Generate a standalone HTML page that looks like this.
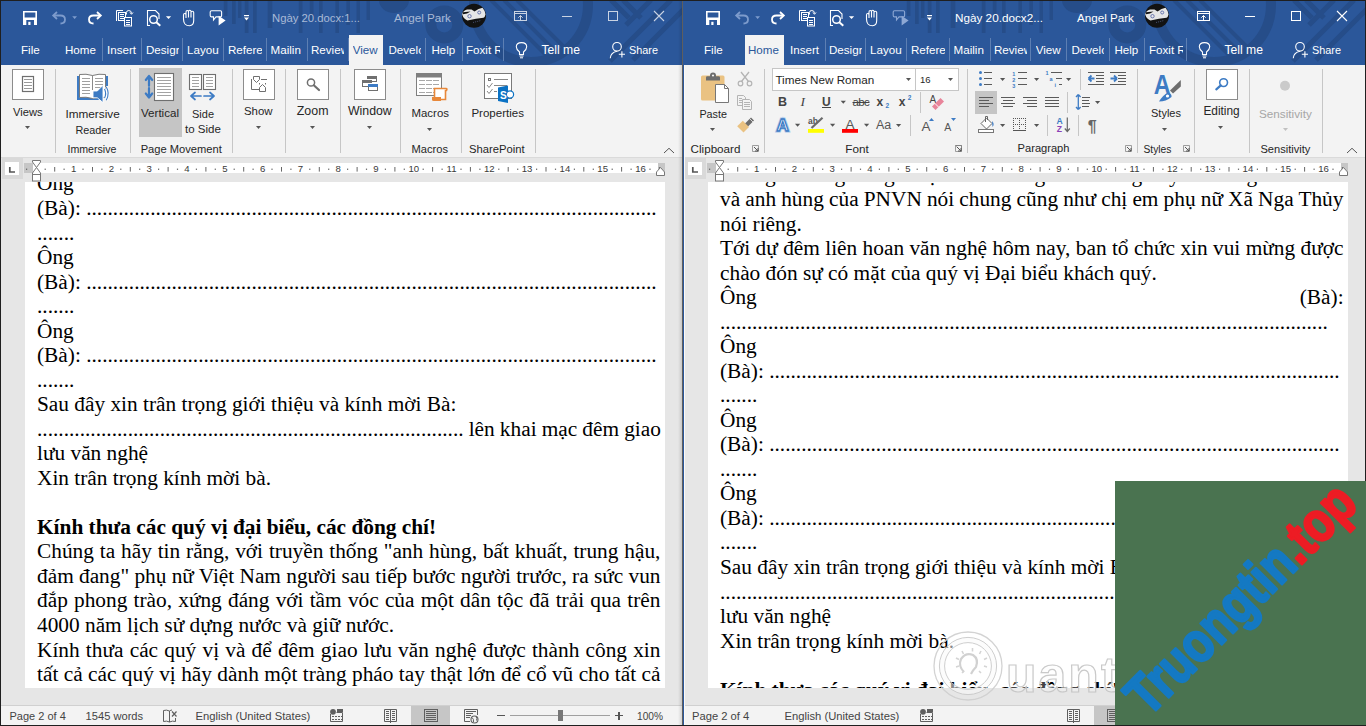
<!DOCTYPE html><html><head><meta charset="utf-8"><style>
html,body{margin:0;padding:0;}
body{width:1366px;height:726px;overflow:hidden;position:relative;background:#1f1f1f;font-family:"Liberation Sans",sans-serif;}
.win{position:absolute;top:0;width:683px;height:726px;overflow:hidden;}
.t{position:absolute;white-space:pre;}
.r{position:absolute;}
.s{position:absolute;overflow:visible;}
.doc{position:absolute;font-family:"Liberation Serif",serif;font-size:21.333px;color:#000;white-space:pre;}
</style></head><body><div class="win" style="left:0px"><div class="r" style="left:1px;top:1px;width:681px;height:64px;background:#2b579a;"></div><svg class="s" style="left:1px;top:1px;" width="681" height="63" viewBox="0 0 681 63"><g fill="#264d89"><rect x="222.8" y="-1" width="3.6" height="16"/><rect x="231" y="-1" width="3.7" height="24"/><rect x="237" y="-1" width="3.4" height="18"/><rect x="243.8" y="-1" width="3.7" height="33"/><rect x="252" y="-1" width="3.7" height="33"/><rect x="266.7" y="-1" width="4.6" height="28"/><rect x="297.8" y="-1" width="3.7" height="33"/><rect x="308.8" y="-1" width="3.7" height="20"/><rect x="318" y="-1" width="3.6" height="33"/><rect x="334.4" y="-1" width="3.6" height="33"/><rect x="345.4" y="-1" width="3.6" height="25"/><rect x="355.5" y="-1" width="3.5" height="33"/><rect x="365.5" y="-1" width="3.5" height="20"/><path d="M378 -1 A15 13 0 0 0 408 -1 Z"/></g><g fill="none" stroke="#264d89"><circle cx="443.3" cy="23.4" r="13.5" stroke-width="11"/><circle cx="530" cy="4" r="57" stroke-width="10"/><clipPath id="cp0"><circle cx="530" cy="4" r="52"/></clipPath><g clip-path="url(#cp0)" stroke-width="4"><path d="M490 -1 L545 54 M503 -1 L558 54 M516 -1 L571 54"/></g><g stroke-width="5"><path d="M670 -1 L609 60 M683 8 L632 59 M650 -1 L625 24 M622 -1 L640 17 M610 -1 L628 17"/></g></g></svg><div class="r" style="left:1px;top:65px;width:681px;height:92px;background:#f3f3f3;"></div><div class="r" style="left:1px;top:157px;width:681px;height:1px;background:#dadada;"></div><div class="r" style="left:1px;top:158px;width:681px;height:547px;background:#e6e6e6;"></div><div class="r" style="left:1px;top:705px;width:681px;height:1px;background:#d0d0d0;"></div><div class="r" style="left:1px;top:706px;width:681px;height:19px;background:#f3f3f3;"></div><div class="t" style="left:272.00px;top:11.76px;font-size:11.313px;line-height:12.637px;color:#a9bad6;">Ngày 20.docx:1...</div><div class="t" style="left:394.00px;top:11.45px;font-size:11.655px;line-height:13.019px;color:#a9bad6;">Angel Park</div><div class="r" style="left:349px;top:35px;width:34px;height:30px;background:#f3f3f3;"></div><div class="r" style="left:102px;top:38px;width:1px;height:23px;background:#5d7fb3;"></div><div class="r" style="left:141px;top:38px;width:1px;height:23px;background:#5d7fb3;"></div><div class="r" style="left:182px;top:38px;width:1px;height:23px;background:#5d7fb3;"></div><div class="r" style="left:223px;top:38px;width:1px;height:23px;background:#5d7fb3;"></div><div class="r" style="left:266px;top:38px;width:1px;height:23px;background:#5d7fb3;"></div><div class="r" style="left:307px;top:38px;width:1px;height:23px;background:#5d7fb3;"></div><div class="r" style="left:348px;top:38px;width:1px;height:23px;background:#5d7fb3;"></div><div class="r" style="left:425px;top:38px;width:1px;height:23px;background:#5d7fb3;"></div><div class="r" style="left:462px;top:38px;width:1px;height:23px;background:#5d7fb3;"></div><div class="r" style="left:503px;top:38px;width:1px;height:23px;background:#5d7fb3;"></div><div class="t" style="left:21.0px;top:43.7px;width:39.0px;overflow:hidden;font-size:11.6px;line-height:12.96px;color:#ffffff">File</div><div class="t" style="left:65.0px;top:43.7px;width:31.5px;overflow:hidden;font-size:11.6px;line-height:12.96px;color:#ffffff">Home</div><div class="t" style="left:107.0px;top:43.7px;width:32.0px;overflow:hidden;font-size:11.6px;line-height:12.96px;color:#ffffff">Insert</div><div class="t" style="left:146.0px;top:43.7px;width:32.5px;overflow:hidden;font-size:11.6px;line-height:12.96px;color:#ffffff">Design</div><div class="t" style="left:187.0px;top:43.7px;width:32.0px;overflow:hidden;font-size:11.6px;line-height:12.96px;color:#ffffff">Layout</div><div class="t" style="left:228.0px;top:43.7px;width:33.5px;overflow:hidden;font-size:11.6px;line-height:12.96px;color:#ffffff">References</div><div class="t" style="left:270.6px;top:43.7px;width:30.4px;overflow:hidden;font-size:11.6px;line-height:12.96px;color:#ffffff">Mailings</div><div class="t" style="left:311.0px;top:43.7px;width:32.5px;overflow:hidden;font-size:11.6px;line-height:12.96px;color:#ffffff">Review</div><div class="t" style="left:352.7px;top:43.7px;width:28.3px;overflow:hidden;font-size:11.6px;line-height:12.96px;color:#2b579a">View</div><div class="t" style="left:388.5px;top:43.7px;width:32.0px;overflow:hidden;font-size:11.6px;line-height:12.96px;color:#ffffff">Developer</div><div class="t" style="left:431.4px;top:43.7px;width:27.6px;overflow:hidden;font-size:11.6px;line-height:12.96px;color:#ffffff">Help</div><div class="t" style="left:466.0px;top:43.7px;width:33.5px;overflow:hidden;font-size:11.6px;line-height:12.96px;color:#ffffff">Foxit Reader</div><div class="t" style="left:541.50px;top:44.00px;font-size:12.153px;line-height:13.575px;color:#ffffff;">Tell me</div><div class="t" style="left:629.00px;top:44.36px;font-size:10.870px;line-height:12.141px;color:#ffffff;">Share</div><div class="r" style="left:55px;top:69px;width:1px;height:84px;background:#c6c6c6;"></div><div class="r" style="left:130px;top:69px;width:1px;height:84px;background:#c6c6c6;"></div><div class="r" style="left:232px;top:69px;width:1px;height:84px;background:#c6c6c6;"></div><div class="r" style="left:285px;top:69px;width:1px;height:84px;background:#c6c6c6;"></div><div class="r" style="left:340px;top:69px;width:1px;height:84px;background:#c6c6c6;"></div><div class="r" style="left:400px;top:69px;width:1px;height:84px;background:#c6c6c6;"></div><div class="r" style="left:461px;top:69px;width:1px;height:84px;background:#c6c6c6;"></div><div class="r" style="left:535px;top:69px;width:1px;height:84px;background:#c6c6c6;"></div><div class="t" style="left:13.00px;top:105.66px;font-size:11.209px;line-height:12.520px;color:#262626;">Views</div><svg class="s" style="left:24.5px;top:126px;" width="6" height="4" viewBox="0 0 6 4"><path d="M0 0 H5 L2.5 3 Z" fill="#555"/></svg><div class="t" style="left:65.40px;top:107.13px;font-size:11.795px;line-height:13.175px;color:#262626;">Immersive</div><div class="t" style="left:75.50px;top:123.90px;font-size:10.823px;line-height:12.090px;color:#262626;">Reader</div><div class="t" style="left:67.50px;top:143.88px;font-size:10.627px;line-height:11.871px;color:#262626;">Immersive</div><div class="r" style="left:139px;top:68px;width:43px;height:69px;background:#c5c5c5;"></div><div class="t" style="left:141.00px;top:107.12px;font-size:11.586px;line-height:12.941px;color:#262626;">Vertical</div><div class="t" style="left:192.00px;top:107.65px;font-size:10.993px;line-height:12.279px;color:#262626;">Side</div><div class="t" style="left:185.00px;top:123.23px;font-size:11.568px;line-height:12.922px;color:#262626;">to Side</div><div class="t" style="left:140.70px;top:142.90px;font-size:11.157px;line-height:12.462px;color:#262626;">Page Movement</div><div class="t" style="left:244.00px;top:105.45px;font-size:11.434px;line-height:12.772px;color:#262626;">Show</div><svg class="s" style="left:255.5px;top:126px;" width="6" height="4" viewBox="0 0 6 4"><path d="M0 0 H5 L2.5 3 Z" fill="#555"/></svg><div class="t" style="left:296.80px;top:104.58px;font-size:12.402px;line-height:13.853px;color:#262626;">Zoom</div><svg class="s" style="left:309.6px;top:126px;" width="6" height="4" viewBox="0 0 6 4"><path d="M0 0 H5 L2.5 3 Z" fill="#555"/></svg><div class="t" style="left:348.00px;top:104.66px;font-size:12.313px;line-height:13.753px;color:#262626;">Window</div><svg class="s" style="left:367px;top:126px;" width="6" height="4" viewBox="0 0 6 4"><path d="M0 0 H5 L2.5 3 Z" fill="#555"/></svg><div class="t" style="left:411.50px;top:107.25px;font-size:11.438px;line-height:12.776px;color:#262626;">Macros</div><svg class="s" style="left:427px;top:127.5px;" width="6" height="4" viewBox="0 0 6 4"><path d="M0 0 H5 L2.5 3 Z" fill="#555"/></svg><div class="t" style="left:411.50px;top:142.92px;font-size:11.133px;line-height:12.436px;color:#262626;">Macros</div><div class="t" style="left:471.40px;top:107.15px;font-size:11.542px;line-height:12.892px;color:#262626;">Properties</div><div class="t" style="left:469.00px;top:142.82px;font-size:11.249px;line-height:12.565px;color:#262626;">SharePoint</div><div class="r" style="left:2px;top:158px;width:21px;height:21px;background:#d9d9d9;"></div><div class="r" style="left:5px;top:162px;width:14px;height:13px;background:#ffffff;"></div><svg class="s" style="left:8px;top:167px;" width="8" height="7" viewBox="0 0 8 7"><path d="M1.8 0 V5 H7" stroke="#555" stroke-width="1.7" fill="none"/></svg><div class="r" style="left:24px;top:163px;width:9px;height:10px;background:#c6c6c6;"></div><div class="r" style="left:33px;top:163px;width:625px;height:10px;background:#ffffff;"></div><div class="r" style="left:658px;top:163px;width:7px;height:10px;background:#c6c6c6;"></div><svg class="s" style="left:0px;top:157px;" width="683" height="25" viewBox="0 0 683 25"><rect x="44.6" y="11.6" width="1.2" height="1.3" fill="#666"/><rect x="54.2" y="10" width="1" height="4.6" fill="#666"/><rect x="63.5" y="11.6" width="1.2" height="1.3" fill="#666"/><rect x="82.4" y="11.6" width="1.2" height="1.3" fill="#666"/><rect x="92.0" y="10" width="1" height="4.6" fill="#666"/><rect x="101.3" y="11.6" width="1.2" height="1.3" fill="#666"/><rect x="120.2" y="11.6" width="1.2" height="1.3" fill="#666"/><rect x="129.8" y="10" width="1" height="4.6" fill="#666"/><rect x="139.1" y="11.6" width="1.2" height="1.3" fill="#666"/><rect x="158.0" y="11.6" width="1.2" height="1.3" fill="#666"/><rect x="167.6" y="10" width="1" height="4.6" fill="#666"/><rect x="176.9" y="11.6" width="1.2" height="1.3" fill="#666"/><rect x="195.8" y="11.6" width="1.2" height="1.3" fill="#666"/><rect x="205.4" y="10" width="1" height="4.6" fill="#666"/><rect x="214.7" y="11.6" width="1.2" height="1.3" fill="#666"/><rect x="233.6" y="11.6" width="1.2" height="1.3" fill="#666"/><rect x="243.2" y="10" width="1" height="4.6" fill="#666"/><rect x="252.5" y="11.6" width="1.2" height="1.3" fill="#666"/><rect x="271.4" y="11.6" width="1.2" height="1.3" fill="#666"/><rect x="281.0" y="10" width="1" height="4.6" fill="#666"/><rect x="290.3" y="11.6" width="1.2" height="1.3" fill="#666"/><rect x="309.2" y="11.6" width="1.2" height="1.3" fill="#666"/><rect x="318.8" y="10" width="1" height="4.6" fill="#666"/><rect x="328.1" y="11.6" width="1.2" height="1.3" fill="#666"/><rect x="347.0" y="11.6" width="1.2" height="1.3" fill="#666"/><rect x="356.6" y="10" width="1" height="4.6" fill="#666"/><rect x="365.9" y="11.6" width="1.2" height="1.3" fill="#666"/><rect x="384.8" y="11.6" width="1.2" height="1.3" fill="#666"/><rect x="394.4" y="10" width="1" height="4.6" fill="#666"/><rect x="403.7" y="11.6" width="1.2" height="1.3" fill="#666"/><rect x="422.6" y="11.6" width="1.2" height="1.3" fill="#666"/><rect x="432.1" y="10" width="1" height="4.6" fill="#666"/><rect x="441.5" y="11.6" width="1.2" height="1.3" fill="#666"/><rect x="460.4" y="11.6" width="1.2" height="1.3" fill="#666"/><rect x="469.9" y="10" width="1" height="4.6" fill="#666"/><rect x="479.3" y="11.6" width="1.2" height="1.3" fill="#666"/><rect x="498.2" y="11.6" width="1.2" height="1.3" fill="#666"/><rect x="507.7" y="10" width="1" height="4.6" fill="#666"/><rect x="517.1" y="11.6" width="1.2" height="1.3" fill="#666"/><rect x="536.0" y="11.6" width="1.2" height="1.3" fill="#666"/><rect x="545.5" y="10" width="1" height="4.6" fill="#666"/><rect x="554.9" y="11.6" width="1.2" height="1.3" fill="#666"/><rect x="573.8" y="11.6" width="1.2" height="1.3" fill="#666"/><rect x="583.3" y="10" width="1" height="4.6" fill="#666"/><rect x="592.7" y="11.6" width="1.2" height="1.3" fill="#666"/><rect x="611.6" y="11.6" width="1.2" height="1.3" fill="#666"/><rect x="621.1" y="10" width="1" height="4.6" fill="#666"/><rect x="630.5" y="11.6" width="1.2" height="1.3" fill="#666"/><rect x="649.4" y="11.6" width="1.2" height="1.3" fill="#666"/><rect x="658.9" y="10" width="1" height="4.6" fill="#666"/><rect x="26" y="11.6" width="1.2" height="1.3" fill="#666"/></svg><div class="t" style="left:65.6px;top:164.2px;width:16px;text-align:center;font-size:9.6px;line-height:9px;color:#3a3a3a">1</div><div class="t" style="left:103.4px;top:164.2px;width:16px;text-align:center;font-size:9.6px;line-height:9px;color:#3a3a3a">2</div><div class="t" style="left:141.2px;top:164.2px;width:16px;text-align:center;font-size:9.6px;line-height:9px;color:#3a3a3a">3</div><div class="t" style="left:179.0px;top:164.2px;width:16px;text-align:center;font-size:9.6px;line-height:9px;color:#3a3a3a">4</div><div class="t" style="left:216.8px;top:164.2px;width:16px;text-align:center;font-size:9.6px;line-height:9px;color:#3a3a3a">5</div><div class="t" style="left:254.6px;top:164.2px;width:16px;text-align:center;font-size:9.6px;line-height:9px;color:#3a3a3a">6</div><div class="t" style="left:292.4px;top:164.2px;width:16px;text-align:center;font-size:9.6px;line-height:9px;color:#3a3a3a">7</div><div class="t" style="left:330.2px;top:164.2px;width:16px;text-align:center;font-size:9.6px;line-height:9px;color:#3a3a3a">8</div><div class="t" style="left:368.0px;top:164.2px;width:16px;text-align:center;font-size:9.6px;line-height:9px;color:#3a3a3a">9</div><div class="t" style="left:405.8px;top:164.2px;width:16px;text-align:center;font-size:9.6px;line-height:9px;color:#3a3a3a">10</div><div class="t" style="left:443.5px;top:164.2px;width:16px;text-align:center;font-size:9.6px;line-height:9px;color:#3a3a3a">11</div><div class="t" style="left:481.3px;top:164.2px;width:16px;text-align:center;font-size:9.6px;line-height:9px;color:#3a3a3a">12</div><div class="t" style="left:519.1px;top:164.2px;width:16px;text-align:center;font-size:9.6px;line-height:9px;color:#3a3a3a">13</div><div class="t" style="left:556.9px;top:164.2px;width:16px;text-align:center;font-size:9.6px;line-height:9px;color:#3a3a3a">14</div><div class="t" style="left:594.7px;top:164.2px;width:16px;text-align:center;font-size:9.6px;line-height:9px;color:#3a3a3a">15</div><div class="t" style="left:632.5px;top:164.2px;width:16px;text-align:center;font-size:9.6px;line-height:9px;color:#3a3a3a">16</div><svg class="s" style="left:31px;top:159px;" width="11" height="23" viewBox="0 0 11 23"><path d="M1.5 1.5 H9.5 V3 L5.5 8.5 L9.5 14 V15.5 H1.5 V14 L5.5 8.5 L1.5 3 Z" fill="#fff" stroke="#777" stroke-width="1"/><rect x="1.5" y="15.5" width="8" height="6.5" fill="#fff" stroke="#777" stroke-width="1"/></svg><svg class="s" style="left:655px;top:163px;" width="11" height="14" viewBox="0 0 11 14"><path d="M1.5 12.5 H9.5 V9 L5.5 4.5 L1.5 9 Z" fill="#fff" stroke="#777" stroke-width="1"/></svg><div class="r" style="left:25px;top:182px;width:640px;height:506px;background:#ffffff;"></div><div style="position:absolute;left:25px;top:182px;width:640px;height:506px;overflow:hidden;"><div style="position:absolute;left:-25px;top:-182px;width:683px;height:726px;"><div class="doc" style="left:37px;top:171.44px;line-height:24.53px;">Ông</div><div class="doc" style="left:37px;top:195.97px;line-height:24.53px;">(Bà): ...........................................................................................................</div><div class="doc" style="left:37px;top:220.50px;line-height:24.53px;">.......</div><div class="doc" style="left:37px;top:245.03px;line-height:24.53px;">Ông</div><div class="doc" style="left:37px;top:269.56px;line-height:24.53px;">(Bà): ...........................................................................................................</div><div class="doc" style="left:37px;top:294.09px;line-height:24.53px;">.......</div><div class="doc" style="left:37px;top:318.62px;line-height:24.53px;">Ông</div><div class="doc" style="left:37px;top:343.15px;line-height:24.53px;">(Bà): ...........................................................................................................</div><div class="doc" style="left:37px;top:367.68px;line-height:24.53px;">.......</div><div class="doc" style="left:37px;top:392.21px;line-height:24.53px;">Sau đây xin trân trọng giới thiệu và kính mời Bà:</div><div class="doc" style="left:37px;top:416.74px;line-height:24.53px;word-spacing:-0.217px;">................................................................................ lên khai mạc đêm giao</div><div class="doc" style="left:37px;top:441.27px;line-height:24.53px;">lưu văn nghệ</div><div class="doc" style="left:37px;top:465.80px;line-height:24.53px;">Xin trân trọng kính mời bà.</div><div class="doc" style="left:37px;top:514.86px;line-height:24.53px;font-weight:bold;">Kính thưa các quý vị đại biểu, các đồng chí!</div><div class="doc" style="left:37px;top:539.39px;line-height:24.53px;word-spacing:0.534px;">Chúng ta hãy tin rằng, với truyền thống "anh hùng, bất khuất, trung hậu,</div><div class="doc" style="left:37px;top:563.92px;line-height:24.53px;word-spacing:-0.064px;">đảm đang" phụ nữ Việt Nam người sau tiếp bước người trước, ra sức vun</div><div class="doc" style="left:37px;top:588.45px;line-height:24.53px;word-spacing:0.870px;">đắp phong trào, xứng đáng với tầm vóc của một dân tộc đã trải qua trên</div><div class="doc" style="left:37px;top:612.98px;line-height:24.53px;">4000 năm lịch sử dựng nước và giữ nước.</div><div class="doc" style="left:37px;top:637.51px;line-height:24.53px;word-spacing:0.868px;">Kính thưa các quý vị và để đêm giao lưu văn nghệ được thành công xin</div><div class="doc" style="left:37px;top:662.04px;line-height:24.53px;word-spacing:0.056px;">tất cả các quý vị hãy dành một tràng pháo tay thật lớn để cổ vũ cho tất cả</div><div class="doc" style="left:37px;top:686.57px;line-height:24.53px;">các đại biểu đến dự.</div></div></div><div class="t" style="left:9.50px;top:709.84px;font-size:11.011px;line-height:12.299px;color:#444444;">Page 2 of 4</div><div class="t" style="left:85.60px;top:709.72px;font-size:11.134px;line-height:12.437px;color:#444444;">1545 words</div><div class="t" style="left:195.50px;top:709.63px;font-size:11.238px;line-height:12.553px;color:#444444;">English (United States)</div><div class="r" style="left:411px;top:706px;width:39px;height:19px;background:#c6c6c6;"></div><div class="t" style="left:637.00px;top:710.61px;font-size:10.158px;line-height:11.346px;color:#444444;">100%</div><div class="r" style="left:510px;top:715px;width:100px;height:1px;background:#a0a0a0;"></div><div class="r" style="left:558px;top:710px;width:5px;height:11px;background:#777777;"></div><div class="r" style="left:497px;top:715px;width:8px;height:1.4px;background:#555;"></div><div class="r" style="left:615px;top:715px;width:8px;height:1.4px;background:#555;"></div><div class="r" style="left:618.3px;top:711.5px;width:1.4px;height:8px;background:#555;"></div><svg class="s" style="left:0;top:0" width="683" height="726" viewBox="0 0 683 726"><defs><filter id="blur0"><feGaussianBlur stdDeviation="0.7"/></filter></defs><path d="M23 11 H37 V25 H23 Z M24.6 12.6 V17.6 H35.4 V12.6 Z M26.3 20 V25 H34 V20 Z" fill="#ffffff" fill-rule="evenodd"/><rect x="28.3" y="21.8" width="2.2" height="3.2" fill="#ffffff"/><path d="M54 15.5 H60.5 Q65 15.5 65 19.5 Q65 23.5 60.5 23.5" stroke="#7d9bcc" stroke-width="1.8" fill="none"/><path d="M57 12 L53.2 15.5 L57 19" stroke="#7d9bcc" stroke-width="1.8" fill="none"/><path d="M72.2 16.3 H77 L74.6 19 Z" fill="#7d9bcc"/><path d="M100 15.5 H93.5 Q89 15.5 89 19.5 Q89 23.5 93.5 23.5" stroke="#ffffff" stroke-width="1.8" fill="none"/><path d="M97 12 L100.8 15.5 L97 19" stroke="#ffffff" stroke-width="1.8" fill="none"/><path d="M116.5 21 V10.5 H123" stroke="#ffffff" stroke-width="1" fill="none"/><rect x="118.5" y="12.5" width="7" height="8" fill="#2b579a" stroke="#ffffff" stroke-width="1"/><rect x="120" y="14" width="4" height="1" fill="#ffffff"/><rect x="120" y="16" width="4" height="1" fill="#ffffff"/><rect x="120" y="18" width="4" height="1" fill="#ffffff"/><rect x="124.5" y="17.5" width="7" height="8.5" fill="#2b579a" stroke="#ffffff" stroke-width="1"/><rect x="126" y="20" width="4" height="1" fill="#ffffff"/><rect x="126" y="22" width="4" height="1" fill="#ffffff"/><rect x="126" y="24" width="4" height="1" fill="#ffffff"/><path d="M126.5 14.5 V12.5 Q126.5 10.5 128.8 10.5 Q131.5 10.5 131.5 13.5" stroke="#ffffff" stroke-width="1" fill="none"/><path d="M130 12.5 L131.5 14.3 L133 12.5" stroke="#ffffff" stroke-width="1" fill="none"/><path d="M150 25.5 H147.5 V10.5 H155.5 L159 14 V19" stroke="#ffffff" stroke-width="1.1" fill="none"/><circle cx="153.5" cy="19.5" r="3.8" fill="none" stroke="#ffffff" stroke-width="1.5"/><path d="M156.3 22.3 L160.3 25.8" stroke="#ffffff" stroke-width="2"/><path d="M165.9 16.3 H171.2 L168.5 19 Z" fill="#ffffff"/><path d="M185 24 Q183.5 22 183.5 19 V15 Q183.5 13.5 184.7 13.5 Q186 13.5 186 15 V18 V12 Q186 10.5 187.3 10.5 Q188.5 10.5 188.5 12 V17.5 V11.5 Q188.5 10.2 189.8 10.2 Q191 10.2 191 11.5 V17.5 V12.5 Q191 11.2 192.3 11.2 Q193.7 11.2 193.7 12.5 V20.5 Q193.7 25.5 189.5 25.7 Q186.5 25.7 185 24 Z" fill="none" stroke="#ffffff" stroke-width="1.1"/><path d="M211.5 10.7 H220.3 Q221.6 10.7 221.6 12 V15.5 Q221.6 16.9 220.3 16.9 H216 L213.5 20 V16.9 H211.5 Q210.2 16.9 210.2 15.5 V12 Q210.2 10.7 211.5 10.7 Z" fill="none" stroke="#ffffff" stroke-width="1.1"/><path d="M218.6 15.8 L225.6 20.6 L218.6 25.5 Z" fill="#ffffff"/><rect x="244" y="15" width="5" height="1.2" fill="#ffffff"/><path d="M244 17.5 H249 L246.5 20.5 Z" fill="#ffffff"/><circle cx="474" cy="15.8" r="12" fill="#121212"/><path d="M462.2 14.5 Q463 10.5 467 9.6 L471.5 9.4 L474.5 11.6 L478.5 9 L482.5 7.8 Q485 10.5 485.5 14.5 Q485 17 483.5 17.8 L476 18.8 L467.5 20.6 Q463.5 19 462.2 14.5 Z" fill="#e6e6e6"/><path d="M463 12.2 L470.5 11.5 L467 13.6 L463 14.2 Z" fill="#121212"/><circle cx="469.5" cy="16.2" r="1.7" fill="none" stroke="#3d4f9a" stroke-width="0.7"/><circle cx="479.2" cy="12.5" r="1.5" fill="none" stroke="#3d4f9a" stroke-width="0.7"/><path d="M473 22.5 L481 20.5" stroke="#6a7ab0" stroke-width="0.6" stroke-dasharray="1 1"/><rect x="514.5" y="11.5" width="12" height="9" fill="none" stroke="#c9d3e3" stroke-width="1"/><rect x="515" y="13" width="11" height="1" fill="#c9d3e3"/><path d="M520.5 20 V15.5 M518.3 17.7 L520.5 15.5 L522.7 17.7" stroke="#c9d3e3" stroke-width="1" fill="none"/><rect x="562" y="16" width="10" height="1" fill="#c9d3e3"/><rect x="608.5" y="11.5" width="9" height="9" fill="none" stroke="#c9d3e3" stroke-width="1"/><path d="M654 11 L664 21 M664 11 L654 21" stroke="#c9d3e3" stroke-width="1.1"/><path d="M519.5 54.5 V52 Q516.3 49.5 516.3 46.8 Q516.3 42.6 521.5 42.6 Q526.7 42.6 526.7 46.8 Q526.7 49.5 523.5 52 V54.5 Z" fill="none" stroke="#ffffff" stroke-width="1.1"/><rect x="519.5" y="55.5" width="4" height="1" fill="#ffffff"/><rect x="520" y="57.3" width="3" height="1" fill="#ffffff"/><circle cx="617" cy="46.8" r="4.3" fill="none" stroke="#ffffff" stroke-width="1.1"/><path d="M610.2 58.2 Q610.8 52.5 617 51.3" fill="none" stroke="#ffffff" stroke-width="1.1"/><path d="M618.8 54.3 H625 M621.9 51.3 V57.4" stroke="#ffffff" stroke-width="1.1"/><rect x="12.5" y="69.5" width="31" height="30" fill="#fff" stroke="#8c8c8c" stroke-width="1"/><rect x="22.5" y="76.5" width="11" height="15" fill="#fff" stroke="#6f6f6f" stroke-width="1.2"/><rect x="24" y="79" width="8" height="1" fill="#999"/><rect x="24" y="82" width="8" height="1" fill="#999"/><rect x="24" y="85" width="8" height="1" fill="#999"/><rect x="24" y="88" width="8" height="1" fill="#999"/><path d="M77 76 H108 V86 H103 V100 H77 Z" fill="#3d7bc4"/><path d="M79.5 74.5 Q86 73.5 92.5 75.5 Q99 73.5 105.5 74.5 V97.5 Q99 96.5 92.5 98.5 Q86 96.5 79.5 97.5 Z" fill="#fff" stroke="#7a7a7a" stroke-width="1"/><rect x="92" y="75" width="1" height="15" fill="#8a8a8a"/><rect x="82" y="78" width="8" height="1" fill="#a0a0a0"/><rect x="82" y="81" width="8" height="1" fill="#a0a0a0"/><rect x="82" y="84" width="8" height="1" fill="#a0a0a0"/><rect x="82" y="87" width="8" height="1" fill="#a0a0a0"/><rect x="82" y="90" width="8" height="1" fill="#a0a0a0"/><rect x="82" y="93" width="8" height="1" fill="#a0a0a0"/><rect x="95" y="78" width="8" height="1" fill="#a0a0a0"/><rect x="95" y="81" width="8" height="1" fill="#a0a0a0"/><rect x="95" y="84" width="8" height="1" fill="#a0a0a0"/><rect x="95" y="87" width="8" height="1" fill="#a0a0a0"/><path d="M93 91 H97.3 L103 85.3 V102.6 L97.3 97.8 H93 Z" fill="#3d7bc4" stroke="#fff" stroke-width="0.9"/><path d="M104.5 89 Q106.8 93.5 104.5 98 M106.2 86.8 Q110.2 93.5 106.2 100.2" fill="none" stroke="#fff" stroke-width="2.6"/><path d="M104.5 89 Q106.8 93.5 104.5 98 M106.2 86.8 Q110.2 93.5 106.2 100.2" fill="none" stroke="#3d7bc4" stroke-width="1.1"/><rect x="154.5" y="73.5" width="19" height="27" fill="#fff" stroke="#6f6f6f" stroke-width="1.1"/><rect x="157" y="77" width="14" height="1" fill="#a3a3a3"/><rect x="157" y="80" width="14" height="1" fill="#a3a3a3"/><rect x="157" y="83" width="14" height="1" fill="#a3a3a3"/><rect x="157" y="86" width="14" height="1" fill="#a3a3a3"/><rect x="157" y="89" width="14" height="1" fill="#a3a3a3"/><rect x="157" y="92" width="14" height="1" fill="#a3a3a3"/><rect x="157" y="95" width="14" height="1" fill="#a3a3a3"/><path d="M149 76 L145.8 80 M149 76 L152.2 80 M149 76.5 V85.8" stroke="#3d7bc4" stroke-width="2.2" fill="none" stroke-linecap="round"/><path d="M149 97.5 L145.8 93.5 M149 97.5 L152.2 93.5 M149 97 V88.2" stroke="#3d7bc4" stroke-width="2.2" fill="none" stroke-linecap="round"/><rect x="189.5" y="74.5" width="12" height="15" fill="#fff" stroke="#6f6f6f" stroke-width="1.1"/><rect x="203.5" y="74.5" width="12" height="15" fill="#fff" stroke="#6f6f6f" stroke-width="1.1"/><rect x="192" y="77" width="7" height="1" fill="#a3a3a3"/><rect x="192" y="80" width="7" height="1" fill="#a3a3a3"/><rect x="192" y="83" width="7" height="1" fill="#a3a3a3"/><rect x="192" y="86" width="7" height="1" fill="#a3a3a3"/><rect x="206" y="77" width="7" height="1" fill="#a3a3a3"/><rect x="206" y="80" width="7" height="1" fill="#a3a3a3"/><rect x="206" y="83" width="7" height="1" fill="#a3a3a3"/><rect x="206" y="86" width="7" height="1" fill="#a3a3a3"/><path d="M191 96 H201 M191 96 L195 92.5 M191 96 L195 99.5" stroke="#3d7bc4" stroke-width="1.7" fill="none" stroke-linecap="round"/><path d="M204 96 H214 M214 96 L210 92.5 M214 96 L210 99.5" stroke="#3d7bc4" stroke-width="1.7" fill="none" stroke-linecap="round"/><rect x="243.5" y="69.5" width="31" height="30" fill="#fff" stroke="#8c8c8c" stroke-width="1"/><path d="M251.5 79 V89.5 H260" stroke="#6f6f6f" stroke-width="1" fill="none"/><path d="M253.5 76.5 H259.5 V79.5 L256.5 82.5 L253.5 79.5 Z" stroke="#6f6f6f" stroke-width="1" fill="none"/><rect x="261" y="79" width="6" height="1" fill="#6f6f6f"/><rect x="259" y="83" width="1" height="1.5" fill="#6f6f6f"/><rect x="265" y="83" width="1" height="1.5" fill="#6f6f6f"/><path d="M259.5 91.5 V87.5 L262.5 84.5 L265.5 87.5 V91.5 Z" stroke="#6f6f6f" stroke-width="1" fill="none"/><rect x="297.5" y="69.5" width="31" height="30" fill="#fff" stroke="#8c8c8c" stroke-width="1"/><circle cx="311" cy="82.5" r="3.6" fill="none" stroke="#6f6f6f" stroke-width="1.5"/><path d="M313.8 85.3 L319 90" stroke="#6f6f6f" stroke-width="2.2" stroke-linecap="round"/><rect x="354.5" y="69.5" width="31" height="30" fill="#fff" stroke="#8c8c8c" stroke-width="1"/><rect x="367" y="76" width="10" height="3" fill="#707070"/><rect x="376" y="79" width="1" height="3" fill="#707070"/><rect x="372" y="81" width="5" height="1" fill="#707070"/><rect x="362" y="80" width="10" height="3" fill="#707070"/><rect x="362" y="83" width="1" height="4" fill="#707070"/><rect x="362" y="86" width="6" height="1" fill="#707070"/><rect x="368" y="84" width="10" height="3" fill="#3d7bc4"/><rect x="368" y="87" width="1" height="4" fill="#707070"/><rect x="377" y="87" width="1" height="4" fill="#707070"/><rect x="368" y="90" width="10" height="1" fill="#707070"/><rect x="369" y="87" width="8" height="3" fill="#fff"/><rect x="416.5" y="73.5" width="25" height="22" fill="#fff" stroke="#7f7f7f" stroke-width="1"/><rect x="416" y="73" width="26" height="4.5" fill="#7f7f7f"/><rect x="419" y="80" width="6" height="1" fill="#a8a8a8"/><rect x="426" y="80" width="6" height="1" fill="#a8a8a8"/><rect x="433" y="80" width="6" height="1" fill="#a8a8a8"/><rect x="419" y="84" width="6" height="1" fill="#a8a8a8"/><rect x="426" y="84" width="6" height="1" fill="#a8a8a8"/><rect x="433" y="84" width="6" height="1" fill="#a8a8a8"/><rect x="419" y="88" width="6" height="1" fill="#a8a8a8"/><rect x="426" y="88" width="6" height="1" fill="#a8a8a8"/><rect x="433" y="88" width="6" height="1" fill="#a8a8a8"/><rect x="419" y="92" width="6" height="1" fill="#a8a8a8"/><rect x="426" y="92" width="6" height="1" fill="#a8a8a8"/><rect x="433" y="92" width="6" height="1" fill="#a8a8a8"/><path d="M434.5 88.5 H446 Q447.5 88.5 446.5 90.5 H445.5 V99.5 H434.5 Z" fill="#fff" stroke="#e8883a" stroke-width="1.6"/><path d="M432 97 H441 V101 H433.5 Q432 101 432 99.5 Z" fill="#e8883a"/><rect x="484.5" y="73.5" width="27" height="25" fill="#fff" stroke="#7a7a7a" stroke-width="1"/><rect x="488.5" y="78.5" width="2" height="2" fill="none" stroke="#777" stroke-width="1"/><rect x="494" y="79" width="14" height="1" fill="#888"/><rect x="494" y="85" width="13" height="1" fill="#888"/><rect x="494" y="91" width="3" height="1" fill="#888"/><path d="M487 85 L489 87.5 L492.5 83" stroke="#888" stroke-width="1" fill="none"/><path d="M487 91 L489 93.5 L492.5 89" stroke="#888" stroke-width="1" fill="none"/><path d="M498 87.5 L508 85.5 V103 L498 101 Z" fill="#0b72c4"/><circle cx="510" cy="94.5" r="3.6" fill="#fff" stroke="#0b72c4" stroke-width="1.2"/><text x="500" y="98.5" font-family="Liberation Sans" font-weight="bold" font-size="10" fill="#fff">S</text><path d="M664 153 L669 148.3 L674 153" stroke="#555" stroke-width="1" fill="none"/><path d="M163.5 710.5 Q166.5 709.5 169.5 711 V722 Q166.5 720.5 163.5 721.5 Z" stroke="#5f5f5f" stroke-width="1" fill="none"/><path d="M169.5 711 Q171 710 172 710 M169.5 722 Q172.5 720.5 175.5 721.5 V718" stroke="#5f5f5f" stroke-width="1" fill="none"/><path d="M172 711.5 L176.5 716.5 M176.5 711.5 L172 716.5" stroke="#5f5f5f" stroke-width="1.2"/><circle cx="333" cy="711.8" r="2.9" fill="#5f5f5f"/><rect x="337" y="709" width="6" height="3" fill="#5f5f5f"/><path d="M330.5 714 V721.5 H342.5 V712.5 H336.5" fill="none" stroke="#5f5f5f" stroke-width="1"/><rect x="332" y="716" width="2" height="1" fill="#5f5f5f"/><rect x="335" y="716" width="2" height="1" fill="#5f5f5f"/><rect x="338" y="716" width="2" height="1" fill="#5f5f5f"/><rect x="341" y="716" width="2" height="1" fill="#5f5f5f"/><rect x="332" y="719" width="2" height="1" fill="#5f5f5f"/><rect x="335" y="719" width="2" height="1" fill="#5f5f5f"/><rect x="338" y="719" width="2" height="1" fill="#5f5f5f"/><rect x="341" y="719" width="2" height="1" fill="#5f5f5f"/><path d="M384.5 709.5 H396.5 V721.5 H384.5 Z" fill="none" stroke="#5f5f5f" stroke-width="1"/><rect x="390" y="709" width="1" height="14" fill="#5f5f5f"/><rect x="386" y="711" width="3" height="1" fill="#5f5f5f"/><rect x="392" y="711" width="3" height="1" fill="#5f5f5f"/><rect x="386" y="713" width="3" height="1" fill="#5f5f5f"/><rect x="392" y="713" width="3" height="1" fill="#5f5f5f"/><rect x="386" y="715" width="3" height="1" fill="#5f5f5f"/><rect x="392" y="715" width="3" height="1" fill="#5f5f5f"/><rect x="386" y="717" width="3" height="1" fill="#5f5f5f"/><rect x="392" y="717" width="3" height="1" fill="#5f5f5f"/><rect x="386" y="719" width="3" height="1" fill="#5f5f5f"/><rect x="392" y="719" width="3" height="1" fill="#5f5f5f"/><rect x="424.5" y="709.5" width="13" height="12" fill="none" stroke="#5f5f5f" stroke-width="1"/><rect x="426" y="711" width="10" height="1" fill="#5f5f5f"/><rect x="426" y="713" width="10" height="1" fill="#5f5f5f"/><rect x="426" y="715" width="10" height="1" fill="#5f5f5f"/><rect x="426" y="717" width="10" height="1" fill="#5f5f5f"/><rect x="426" y="719" width="10" height="1" fill="#5f5f5f"/><path d="M470 721.5 H464.5 V709.5 H477.5 V715" stroke="#5f5f5f" stroke-width="1" fill="none"/><rect x="466" y="711" width="10" height="1" fill="#5f5f5f"/><rect x="466" y="713" width="7" height="1" fill="#5f5f5f"/><rect x="466" y="715" width="5" height="1" fill="#5f5f5f"/><rect x="466" y="717" width="4" height="1" fill="#5f5f5f"/><circle cx="474.5" cy="719.5" r="3.5" fill="#f3f3f3" stroke="#5f5f5f" stroke-width="1.1"/><path d="M472 717.5 Q474 719 473.5 722 M476 716.5 Q477.5 718.5 476.5 720.5" stroke="#5f5f5f" stroke-width="1" fill="none"/></svg><div class="r" style="left:0px;top:0px;width:683px;height:1px;background:#1f1f1f;"></div><div class="r" style="left:0px;top:725px;width:683px;height:1px;background:#1f1f1f;"></div><div class="r" style="left:0px;top:1px;width:1px;height:724px;background:#1f1f1f;"></div><div class="r" style="left:678px;top:1px;width:4px;height:724px;background:linear-gradient(to right, rgba(0,0,0,0), rgba(0,0,0,0.13));"></div><div class="r" style="left:682px;top:1px;width:1px;height:724px;background:#5e5e5e;"></div></div><div class="win" style="left:683px"><div class="r" style="left:1px;top:1px;width:681px;height:64px;background:#2b579a;"></div><svg class="s" style="left:1px;top:1px;" width="681" height="63" viewBox="0 0 681 63"><g fill="#264d89"><rect x="222.8" y="-1" width="3.6" height="16"/><rect x="231" y="-1" width="3.7" height="24"/><rect x="237" y="-1" width="3.4" height="18"/><rect x="243.8" y="-1" width="3.7" height="33"/><rect x="252" y="-1" width="3.7" height="33"/><rect x="266.7" y="-1" width="4.6" height="28"/><rect x="297.8" y="-1" width="3.7" height="33"/><rect x="308.8" y="-1" width="3.7" height="20"/><rect x="318" y="-1" width="3.6" height="33"/><rect x="334.4" y="-1" width="3.6" height="33"/><rect x="345.4" y="-1" width="3.6" height="25"/><rect x="355.5" y="-1" width="3.5" height="33"/><rect x="365.5" y="-1" width="3.5" height="20"/><path d="M378 -1 A15 13 0 0 0 408 -1 Z"/></g><g fill="none" stroke="#264d89"><circle cx="443.3" cy="23.4" r="13.5" stroke-width="11"/><circle cx="530" cy="4" r="57" stroke-width="10"/><clipPath id="cp683"><circle cx="530" cy="4" r="52"/></clipPath><g clip-path="url(#cp683)" stroke-width="4"><path d="M490 -1 L545 54 M503 -1 L558 54 M516 -1 L571 54"/></g><g stroke-width="5"><path d="M670 -1 L609 60 M683 8 L632 59 M650 -1 L625 24 M622 -1 L640 17 M610 -1 L628 17"/></g></g></svg><div class="r" style="left:1px;top:65px;width:681px;height:92px;background:#f3f3f3;"></div><div class="r" style="left:1px;top:157px;width:681px;height:1px;background:#dadada;"></div><div class="r" style="left:1px;top:158px;width:681px;height:547px;background:#e6e6e6;"></div><div class="r" style="left:1px;top:705px;width:681px;height:1px;background:#d0d0d0;"></div><div class="r" style="left:1px;top:706px;width:681px;height:19px;background:#f3f3f3;"></div><div class="t" style="left:272.00px;top:11.38px;font-size:11.731px;line-height:13.104px;color:#ffffff;">Ngày 20.docx2...</div><div class="t" style="left:394.00px;top:11.45px;font-size:11.655px;line-height:13.019px;color:#ffffff;">Angel Park</div><div class="r" style="left:62px;top:35px;width:39px;height:30px;background:#f3f3f3;"></div><div class="r" style="left:142px;top:38px;width:1px;height:23px;background:#5d7fb3;"></div><div class="r" style="left:182px;top:38px;width:1px;height:23px;background:#5d7fb3;"></div><div class="r" style="left:223px;top:38px;width:1px;height:23px;background:#5d7fb3;"></div><div class="r" style="left:266px;top:38px;width:1px;height:23px;background:#5d7fb3;"></div><div class="r" style="left:307px;top:38px;width:1px;height:23px;background:#5d7fb3;"></div><div class="r" style="left:347px;top:38px;width:1px;height:23px;background:#5d7fb3;"></div><div class="r" style="left:383px;top:38px;width:1px;height:23px;background:#5d7fb3;"></div><div class="r" style="left:426px;top:38px;width:1px;height:23px;background:#5d7fb3;"></div><div class="r" style="left:461px;top:38px;width:1px;height:23px;background:#5d7fb3;"></div><div class="r" style="left:503px;top:38px;width:1px;height:23px;background:#5d7fb3;"></div><div class="t" style="left:21.0px;top:43.7px;width:39.0px;overflow:hidden;font-size:11.6px;line-height:12.96px;color:#ffffff">File</div><div class="t" style="left:65.0px;top:43.7px;width:31.5px;overflow:hidden;font-size:11.6px;line-height:12.96px;color:#2b579a">Home</div><div class="t" style="left:107.0px;top:43.7px;width:32.0px;overflow:hidden;font-size:11.6px;line-height:12.96px;color:#ffffff">Insert</div><div class="t" style="left:146.0px;top:43.7px;width:32.5px;overflow:hidden;font-size:11.6px;line-height:12.96px;color:#ffffff">Design</div><div class="t" style="left:187.0px;top:43.7px;width:32.0px;overflow:hidden;font-size:11.6px;line-height:12.96px;color:#ffffff">Layout</div><div class="t" style="left:228.0px;top:43.7px;width:33.5px;overflow:hidden;font-size:11.6px;line-height:12.96px;color:#ffffff">References</div><div class="t" style="left:270.6px;top:43.7px;width:30.4px;overflow:hidden;font-size:11.6px;line-height:12.96px;color:#ffffff">Mailings</div><div class="t" style="left:311.0px;top:43.7px;width:32.5px;overflow:hidden;font-size:11.6px;line-height:12.96px;color:#ffffff">Review</div><div class="t" style="left:352.7px;top:43.7px;width:28.3px;overflow:hidden;font-size:11.6px;line-height:12.96px;color:#ffffff">View</div><div class="t" style="left:388.5px;top:43.7px;width:32.0px;overflow:hidden;font-size:11.6px;line-height:12.96px;color:#ffffff">Developer</div><div class="t" style="left:431.4px;top:43.7px;width:27.6px;overflow:hidden;font-size:11.6px;line-height:12.96px;color:#ffffff">Help</div><div class="t" style="left:466.0px;top:43.7px;width:33.5px;overflow:hidden;font-size:11.6px;line-height:12.96px;color:#ffffff">Foxit Reader</div><div class="t" style="left:541.50px;top:44.00px;font-size:12.153px;line-height:13.575px;color:#ffffff;">Tell me</div><div class="t" style="left:629.00px;top:44.36px;font-size:10.870px;line-height:12.141px;color:#ffffff;">Share</div><div class="r" style="left:81px;top:69px;width:1px;height:84px;background:#c6c6c6;"></div><div class="r" style="left:284px;top:69px;width:1px;height:84px;background:#c6c6c6;"></div><div class="r" style="left:454px;top:69px;width:1px;height:84px;background:#c6c6c6;"></div><div class="r" style="left:511px;top:69px;width:1px;height:84px;background:#c6c6c6;"></div><div class="r" style="left:566px;top:69px;width:1px;height:84px;background:#c6c6c6;"></div><div class="r" style="left:639px;top:69px;width:1px;height:84px;background:#c6c6c6;"></div><div class="t" style="left:16.40px;top:107.83px;font-size:10.798px;line-height:12.062px;color:#262626;">Paste</div><svg class="s" style="left:26.5px;top:127.5px;" width="6" height="4" viewBox="0 0 6 4"><path d="M0 0 H5 L2.5 3 Z" fill="#555"/></svg><div class="t" style="left:7.60px;top:141.75px;font-size:11.655px;line-height:13.019px;color:#262626;">Clipboard</div><div class="r" style="left:89px;top:68px;width:187px;height:23px;background:#ffffff;box-sizing:border-box;border:1px solid #c6c6c6;"></div><div class="r" style="left:232px;top:68px;width:1px;height:23px;background:#c6c6c6;"></div><div class="t" style="left:92.40px;top:73.22px;font-size:11.694px;line-height:13.062px;color:#262626;">Times New Roman</div><svg class="s" style="left:222.7px;top:78.4px;" width="6" height="4" viewBox="0 0 6 4"><path d="M0 0 H5 L2.5 3 Z" fill="#555"/></svg><div class="t" style="left:237.00px;top:75.17px;font-size:9.533px;line-height:10.648px;color:#262626;">16</div><svg class="s" style="left:265.4px;top:78.4px;" width="6" height="4" viewBox="0 0 6 4"><path d="M0 0 H5 L2.5 3 Z" fill="#555"/></svg><div class="t" style="left:162.30px;top:141.58px;font-size:11.733px;line-height:13.106px;color:#262626;">Font</div><div class="t" style="left:334.60px;top:142.23px;font-size:11.127px;line-height:12.429px;color:#262626;">Paragraph</div><div class="t" style="left:468.00px;top:107.03px;font-size:11.019px;line-height:12.308px;color:#262626;">Styles</div><svg class="s" style="left:479.4px;top:128px;" width="6" height="4" viewBox="0 0 6 4"><path d="M0 0 H5 L2.5 3 Z" fill="#555"/></svg><div class="t" style="left:460.50px;top:143.70px;font-size:10.277px;line-height:11.480px;color:#262626;">Styles</div><div class="t" style="left:520.40px;top:104.85px;font-size:11.873px;line-height:13.262px;color:#262626;">Editing</div><svg class="s" style="left:535.2px;top:125.6px;" width="6" height="4" viewBox="0 0 6 4"><path d="M0 0 H5 L2.5 3 Z" fill="#555"/></svg><div class="t" style="left:576.00px;top:107.28px;font-size:11.730px;line-height:13.102px;color:#a6a6a6;">Sensitivity</div><svg class="s" style="left:599.5px;top:128px;" width="6" height="4" viewBox="0 0 6 4"><path d="M0 0 H5 L2.5 3 Z" fill="#c0c0c0"/></svg><div class="t" style="left:577.40px;top:142.93px;font-size:11.126px;line-height:12.428px;color:#262626;">Sensitivity</div><div class="r" style="left:2px;top:158px;width:21px;height:21px;background:#d9d9d9;"></div><div class="r" style="left:5px;top:162px;width:14px;height:13px;background:#ffffff;"></div><svg class="s" style="left:8px;top:167px;" width="8" height="7" viewBox="0 0 8 7"><path d="M1.8 0 V5 H7" stroke="#555" stroke-width="1.7" fill="none"/></svg><div class="r" style="left:24px;top:163px;width:9px;height:10px;background:#c6c6c6;"></div><div class="r" style="left:33px;top:163px;width:625px;height:10px;background:#ffffff;"></div><div class="r" style="left:658px;top:163px;width:7px;height:10px;background:#c6c6c6;"></div><svg class="s" style="left:0px;top:157px;" width="683" height="25" viewBox="0 0 683 25"><rect x="44.6" y="11.6" width="1.2" height="1.3" fill="#666"/><rect x="54.2" y="10" width="1" height="4.6" fill="#666"/><rect x="63.5" y="11.6" width="1.2" height="1.3" fill="#666"/><rect x="82.4" y="11.6" width="1.2" height="1.3" fill="#666"/><rect x="92.0" y="10" width="1" height="4.6" fill="#666"/><rect x="101.3" y="11.6" width="1.2" height="1.3" fill="#666"/><rect x="120.2" y="11.6" width="1.2" height="1.3" fill="#666"/><rect x="129.8" y="10" width="1" height="4.6" fill="#666"/><rect x="139.1" y="11.6" width="1.2" height="1.3" fill="#666"/><rect x="158.0" y="11.6" width="1.2" height="1.3" fill="#666"/><rect x="167.6" y="10" width="1" height="4.6" fill="#666"/><rect x="176.9" y="11.6" width="1.2" height="1.3" fill="#666"/><rect x="195.8" y="11.6" width="1.2" height="1.3" fill="#666"/><rect x="205.4" y="10" width="1" height="4.6" fill="#666"/><rect x="214.7" y="11.6" width="1.2" height="1.3" fill="#666"/><rect x="233.6" y="11.6" width="1.2" height="1.3" fill="#666"/><rect x="243.2" y="10" width="1" height="4.6" fill="#666"/><rect x="252.5" y="11.6" width="1.2" height="1.3" fill="#666"/><rect x="271.4" y="11.6" width="1.2" height="1.3" fill="#666"/><rect x="281.0" y="10" width="1" height="4.6" fill="#666"/><rect x="290.3" y="11.6" width="1.2" height="1.3" fill="#666"/><rect x="309.2" y="11.6" width="1.2" height="1.3" fill="#666"/><rect x="318.8" y="10" width="1" height="4.6" fill="#666"/><rect x="328.1" y="11.6" width="1.2" height="1.3" fill="#666"/><rect x="347.0" y="11.6" width="1.2" height="1.3" fill="#666"/><rect x="356.6" y="10" width="1" height="4.6" fill="#666"/><rect x="365.9" y="11.6" width="1.2" height="1.3" fill="#666"/><rect x="384.8" y="11.6" width="1.2" height="1.3" fill="#666"/><rect x="394.4" y="10" width="1" height="4.6" fill="#666"/><rect x="403.7" y="11.6" width="1.2" height="1.3" fill="#666"/><rect x="422.6" y="11.6" width="1.2" height="1.3" fill="#666"/><rect x="432.1" y="10" width="1" height="4.6" fill="#666"/><rect x="441.5" y="11.6" width="1.2" height="1.3" fill="#666"/><rect x="460.4" y="11.6" width="1.2" height="1.3" fill="#666"/><rect x="469.9" y="10" width="1" height="4.6" fill="#666"/><rect x="479.3" y="11.6" width="1.2" height="1.3" fill="#666"/><rect x="498.2" y="11.6" width="1.2" height="1.3" fill="#666"/><rect x="507.7" y="10" width="1" height="4.6" fill="#666"/><rect x="517.1" y="11.6" width="1.2" height="1.3" fill="#666"/><rect x="536.0" y="11.6" width="1.2" height="1.3" fill="#666"/><rect x="545.5" y="10" width="1" height="4.6" fill="#666"/><rect x="554.9" y="11.6" width="1.2" height="1.3" fill="#666"/><rect x="573.8" y="11.6" width="1.2" height="1.3" fill="#666"/><rect x="583.3" y="10" width="1" height="4.6" fill="#666"/><rect x="592.7" y="11.6" width="1.2" height="1.3" fill="#666"/><rect x="611.6" y="11.6" width="1.2" height="1.3" fill="#666"/><rect x="621.1" y="10" width="1" height="4.6" fill="#666"/><rect x="630.5" y="11.6" width="1.2" height="1.3" fill="#666"/><rect x="649.4" y="11.6" width="1.2" height="1.3" fill="#666"/><rect x="658.9" y="10" width="1" height="4.6" fill="#666"/><rect x="26" y="11.6" width="1.2" height="1.3" fill="#666"/></svg><div class="t" style="left:65.6px;top:164.2px;width:16px;text-align:center;font-size:9.6px;line-height:9px;color:#3a3a3a">1</div><div class="t" style="left:103.4px;top:164.2px;width:16px;text-align:center;font-size:9.6px;line-height:9px;color:#3a3a3a">2</div><div class="t" style="left:141.2px;top:164.2px;width:16px;text-align:center;font-size:9.6px;line-height:9px;color:#3a3a3a">3</div><div class="t" style="left:179.0px;top:164.2px;width:16px;text-align:center;font-size:9.6px;line-height:9px;color:#3a3a3a">4</div><div class="t" style="left:216.8px;top:164.2px;width:16px;text-align:center;font-size:9.6px;line-height:9px;color:#3a3a3a">5</div><div class="t" style="left:254.6px;top:164.2px;width:16px;text-align:center;font-size:9.6px;line-height:9px;color:#3a3a3a">6</div><div class="t" style="left:292.4px;top:164.2px;width:16px;text-align:center;font-size:9.6px;line-height:9px;color:#3a3a3a">7</div><div class="t" style="left:330.2px;top:164.2px;width:16px;text-align:center;font-size:9.6px;line-height:9px;color:#3a3a3a">8</div><div class="t" style="left:368.0px;top:164.2px;width:16px;text-align:center;font-size:9.6px;line-height:9px;color:#3a3a3a">9</div><div class="t" style="left:405.8px;top:164.2px;width:16px;text-align:center;font-size:9.6px;line-height:9px;color:#3a3a3a">10</div><div class="t" style="left:443.5px;top:164.2px;width:16px;text-align:center;font-size:9.6px;line-height:9px;color:#3a3a3a">11</div><div class="t" style="left:481.3px;top:164.2px;width:16px;text-align:center;font-size:9.6px;line-height:9px;color:#3a3a3a">12</div><div class="t" style="left:519.1px;top:164.2px;width:16px;text-align:center;font-size:9.6px;line-height:9px;color:#3a3a3a">13</div><div class="t" style="left:556.9px;top:164.2px;width:16px;text-align:center;font-size:9.6px;line-height:9px;color:#3a3a3a">14</div><div class="t" style="left:594.7px;top:164.2px;width:16px;text-align:center;font-size:9.6px;line-height:9px;color:#3a3a3a">15</div><div class="t" style="left:632.5px;top:164.2px;width:16px;text-align:center;font-size:9.6px;line-height:9px;color:#3a3a3a">16</div><svg class="s" style="left:31px;top:159px;" width="11" height="23" viewBox="0 0 11 23"><path d="M1.5 1.5 H9.5 V3 L5.5 8.5 L9.5 14 V15.5 H1.5 V14 L5.5 8.5 L1.5 3 Z" fill="#fff" stroke="#777" stroke-width="1"/><rect x="1.5" y="15.5" width="8" height="6.5" fill="#fff" stroke="#777" stroke-width="1"/></svg><svg class="s" style="left:655px;top:163px;" width="11" height="14" viewBox="0 0 11 14"><path d="M1.5 12.5 H9.5 V9 L5.5 4.5 L1.5 9 Z" fill="#fff" stroke="#777" stroke-width="1"/></svg><div class="r" style="left:25px;top:182px;width:640px;height:506px;background:#ffffff;"></div><div style="position:absolute;left:25px;top:182px;width:640px;height:506px;overflow:hidden;"><div style="position:absolute;left:-25px;top:-182px;width:683px;height:726px;"><div class="doc" style="left:82px;top:162.54px;line-height:24.53px;">g</div><div class="doc" style="left:151.5px;top:162.54px;line-height:24.53px;">g</div><div class="doc" style="left:201px;top:162.54px;line-height:24.53px;">g</div><div class="doc" style="left:245px;top:162.54px;line-height:24.53px;">ạ</div><div class="doc" style="left:351.5px;top:162.54px;line-height:24.53px;">g</div><div class="doc" style="left:448.5px;top:162.54px;line-height:24.53px;">g</div><div class="doc" style="left:486px;top:162.54px;line-height:24.53px;">y</div><div class="doc" style="left:563.5px;top:162.54px;line-height:24.53px;">g</div><div class="doc" style="left:37px;top:187.07px;line-height:24.53px;word-spacing:-0.194px;">và anh hùng của PNVN nói chung cũng như chị em phụ nữ Xã Nga Thủy</div><div class="doc" style="left:37px;top:211.60px;line-height:24.53px;">nói riêng.</div><div class="doc" style="left:37px;top:236.13px;line-height:24.53px;word-spacing:0.029px;">Tới dự đêm liên hoan văn nghệ hôm nay, ban tổ chức xin vui mừng được</div><div class="doc" style="left:37px;top:260.66px;line-height:24.53px;">chào đón sự có mặt của quý vị Đại biểu khách quý.</div><div class="doc" style="left:37px;top:285.19px;line-height:24.53px;word-spacing:537.694px;">Ông (Bà):</div><div class="doc" style="left:37px;top:309.72px;line-height:24.53px;">..................................................................................................................</div><div class="doc" style="left:37px;top:334.25px;line-height:24.53px;">Ông</div><div class="doc" style="left:37px;top:358.78px;line-height:24.53px;">(Bà): ...........................................................................................................</div><div class="doc" style="left:37px;top:383.31px;line-height:24.53px;">.......</div><div class="doc" style="left:37px;top:407.84px;line-height:24.53px;">Ông</div><div class="doc" style="left:37px;top:432.37px;line-height:24.53px;">(Bà): ...........................................................................................................</div><div class="doc" style="left:37px;top:456.90px;line-height:24.53px;">.......</div><div class="doc" style="left:37px;top:481.43px;line-height:24.53px;">Ông</div><div class="doc" style="left:37px;top:505.96px;line-height:24.53px;">(Bà): ...........................................................................................................</div><div class="doc" style="left:37px;top:530.49px;line-height:24.53px;">.......</div><div class="doc" style="left:37px;top:555.02px;line-height:24.53px;">Sau đây xin trân trọng giới thiệu và kính mời Bà:</div><div class="doc" style="left:37px;top:579.55px;line-height:24.53px;word-spacing:-0.217px;">................................................................................ lên khai mạc đêm giao</div><div class="doc" style="left:37px;top:604.08px;line-height:24.53px;">lưu văn nghệ</div><div class="doc" style="left:37px;top:628.61px;line-height:24.53px;">Xin trân trọng kính mời bà.</div><div class="doc" style="left:37px;top:677.67px;line-height:24.53px;font-weight:bold;">Kính thưa các quý vị đại biểu, các đồng chí!</div></div></div><div class="t" style="left:9.00px;top:709.66px;font-size:11.206px;line-height:12.517px;color:#444444;">Page 2 of 4</div><div class="t" style="left:101.50px;top:709.63px;font-size:11.238px;line-height:12.553px;color:#444444;">English (United States)</div><div class="r" style="left:411px;top:706px;width:39px;height:19px;background:#c6c6c6;"></div><div class="t" style="left:637.00px;top:710.61px;font-size:10.158px;line-height:11.346px;color:#444444;">100%</div><div class="r" style="left:510px;top:715px;width:100px;height:1px;background:#a0a0a0;"></div><div class="r" style="left:558px;top:710px;width:5px;height:11px;background:#777777;"></div><svg class="s" style="left:0;top:0" width="683" height="726" viewBox="0 0 683 726"><defs><filter id="blur1"><feGaussianBlur stdDeviation="0.7"/></filter></defs><path d="M23 11 H37 V25 H23 Z M24.6 12.6 V17.6 H35.4 V12.6 Z M26.3 20 V25 H34 V20 Z" fill="#ffffff" fill-rule="evenodd"/><rect x="28.3" y="21.8" width="2.2" height="3.2" fill="#ffffff"/><path d="M54 15.5 H60.5 Q65 15.5 65 19.5 Q65 23.5 60.5 23.5" stroke="#7d9bcc" stroke-width="1.8" fill="none"/><path d="M57 12 L53.2 15.5 L57 19" stroke="#7d9bcc" stroke-width="1.8" fill="none"/><path d="M72.2 16.3 H77 L74.6 19 Z" fill="#7d9bcc"/><path d="M100 15.5 H93.5 Q89 15.5 89 19.5 Q89 23.5 93.5 23.5" stroke="#ffffff" stroke-width="1.8" fill="none"/><path d="M97 12 L100.8 15.5 L97 19" stroke="#ffffff" stroke-width="1.8" fill="none"/><path d="M116.5 21 V10.5 H123" stroke="#ffffff" stroke-width="1" fill="none"/><rect x="118.5" y="12.5" width="7" height="8" fill="#2b579a" stroke="#ffffff" stroke-width="1"/><rect x="120" y="14" width="4" height="1" fill="#ffffff"/><rect x="120" y="16" width="4" height="1" fill="#ffffff"/><rect x="120" y="18" width="4" height="1" fill="#ffffff"/><rect x="124.5" y="17.5" width="7" height="8.5" fill="#2b579a" stroke="#ffffff" stroke-width="1"/><rect x="126" y="20" width="4" height="1" fill="#ffffff"/><rect x="126" y="22" width="4" height="1" fill="#ffffff"/><rect x="126" y="24" width="4" height="1" fill="#ffffff"/><path d="M126.5 14.5 V12.5 Q126.5 10.5 128.8 10.5 Q131.5 10.5 131.5 13.5" stroke="#ffffff" stroke-width="1" fill="none"/><path d="M130 12.5 L131.5 14.3 L133 12.5" stroke="#ffffff" stroke-width="1" fill="none"/><path d="M150 25.5 H147.5 V10.5 H155.5 L159 14 V19" stroke="#ffffff" stroke-width="1.1" fill="none"/><circle cx="153.5" cy="19.5" r="3.8" fill="none" stroke="#ffffff" stroke-width="1.5"/><path d="M156.3 22.3 L160.3 25.8" stroke="#ffffff" stroke-width="2"/><path d="M165.9 16.3 H171.2 L168.5 19 Z" fill="#ffffff"/><path d="M185 24 Q183.5 22 183.5 19 V15 Q183.5 13.5 184.7 13.5 Q186 13.5 186 15 V18 V12 Q186 10.5 187.3 10.5 Q188.5 10.5 188.5 12 V17.5 V11.5 Q188.5 10.2 189.8 10.2 Q191 10.2 191 11.5 V17.5 V12.5 Q191 11.2 192.3 11.2 Q193.7 11.2 193.7 12.5 V20.5 Q193.7 25.5 189.5 25.7 Q186.5 25.7 185 24 Z" fill="none" stroke="#ffffff" stroke-width="1.1"/><path d="M211.5 10.7 H220.3 Q221.6 10.7 221.6 12 V15.5 Q221.6 16.9 220.3 16.9 H216 L213.5 20 V16.9 H211.5 Q210.2 16.9 210.2 15.5 V12 Q210.2 10.7 211.5 10.7 Z" fill="none" stroke="#8ea8d4" stroke-width="1.1"/><path d="M218.6 15.8 L225.6 20.6 L218.6 25.5 Z" fill="#8ea8d4"/><rect x="244" y="15" width="5" height="1.2" fill="#ffffff"/><path d="M244 17.5 H249 L246.5 20.5 Z" fill="#ffffff"/><circle cx="474" cy="15.8" r="12" fill="#121212"/><path d="M462.2 14.5 Q463 10.5 467 9.6 L471.5 9.4 L474.5 11.6 L478.5 9 L482.5 7.8 Q485 10.5 485.5 14.5 Q485 17 483.5 17.8 L476 18.8 L467.5 20.6 Q463.5 19 462.2 14.5 Z" fill="#e6e6e6"/><path d="M463 12.2 L470.5 11.5 L467 13.6 L463 14.2 Z" fill="#121212"/><circle cx="469.5" cy="16.2" r="1.7" fill="none" stroke="#3d4f9a" stroke-width="0.7"/><circle cx="479.2" cy="12.5" r="1.5" fill="none" stroke="#3d4f9a" stroke-width="0.7"/><path d="M473 22.5 L481 20.5" stroke="#6a7ab0" stroke-width="0.6" stroke-dasharray="1 1"/><rect x="514.5" y="11.5" width="12" height="9" fill="none" stroke="#ffffff" stroke-width="1"/><rect x="515" y="13" width="11" height="1" fill="#ffffff"/><path d="M520.5 20 V15.5 M518.3 17.7 L520.5 15.5 L522.7 17.7" stroke="#ffffff" stroke-width="1" fill="none"/><rect x="562" y="16" width="10" height="1" fill="#ffffff"/><rect x="608.5" y="11.5" width="9" height="9" fill="none" stroke="#ffffff" stroke-width="1"/><path d="M654 11 L664 21 M664 11 L654 21" stroke="#ffffff" stroke-width="1.1"/><path d="M519.5 54.5 V52 Q516.3 49.5 516.3 46.8 Q516.3 42.6 521.5 42.6 Q526.7 42.6 526.7 46.8 Q526.7 49.5 523.5 52 V54.5 Z" fill="none" stroke="#ffffff" stroke-width="1.1"/><rect x="519.5" y="55.5" width="4" height="1" fill="#ffffff"/><rect x="520" y="57.3" width="3" height="1" fill="#ffffff"/><circle cx="617" cy="46.8" r="4.3" fill="none" stroke="#ffffff" stroke-width="1.1"/><path d="M610.2 58.2 Q610.8 52.5 617 51.3" fill="none" stroke="#ffffff" stroke-width="1.1"/><path d="M618.8 54.3 H625 M621.9 51.3 V57.4" stroke="#ffffff" stroke-width="1.1"/><g transform="translate(-683,0)"><rect x="701" y="75.5" width="23.5" height="25" rx="1.5" fill="#eac282"/><path d="M706 80.5 V77.5 Q706 76.3 707.3 76.3 H710 V75.5 Q710 72.6 713 72.6 Q716 72.6 716 75.5 V76.3 H718.7 Q720 76.3 720 77.5 V80.5 Z" fill="#6d6d6d"/><circle cx="713" cy="75.5" r="1.1" fill="#f3f3f3"/><path d="M715.5 84.5 H724.5 L728.5 88.5 V102.5 H715.5 Z" fill="#fff" stroke="#777" stroke-width="1"/><path d="M724.5 84.5 V88.5 H728.5" fill="none" stroke="#777" stroke-width="1"/><path d="M741 72 L748.5 81.5 M749 72 L741.5 81.5" stroke="#b4b4b4" stroke-width="1.3"/><circle cx="740.5" cy="83.5" r="2.3" fill="none" stroke="#b4b4b4" stroke-width="1.2"/><circle cx="749.5" cy="83.5" r="2.3" fill="none" stroke="#b4b4b4" stroke-width="1.2"/><path d="M737.5 95.5 H743.5 L745.5 97.5 V105.5 H737.5 Z" fill="none" stroke="#b4b4b4" stroke-width="1"/><path d="M742.5 99.5 H749.5 L751.5 101.5 V109.5 H742.5 Z" fill="#f3f3f3" stroke="#b4b4b4" stroke-width="1"/><rect x="739" y="98" width="3" height="1" fill="#b4b4b4"/><rect x="739" y="100" width="3" height="1" fill="#b4b4b4"/><rect x="739" y="102" width="3" height="1" fill="#b4b4b4"/><rect x="744" y="102" width="6" height="1" fill="#b4b4b4"/><rect x="744" y="104" width="6" height="1" fill="#b4b4b4"/><rect x="744" y="106" width="6" height="1" fill="#b4b4b4"/><path d="M744.5 127 L752.5 119" stroke="#6d6d6d" stroke-width="4.2"/><path d="M749.5 118.5 L753.5 122.5" stroke="#f3f3f3" stroke-width="0.8"/><path d="M737.2 126.3 L742.8 120.8 L749 127 L743.5 132.5 Z" fill="#eac282"/><text x="778" y="106" font-family="Liberation Sans" font-weight="bold" font-size="12.5" fill="#444">B</text><text x="800.5" y="106" font-family="Liberation Serif" font-style="italic" font-size="13.5" fill="#444">I</text><text x="822" y="105.7" font-family="Liberation Sans" font-weight="bold" font-size="12" fill="#444">U</text><rect x="822" y="107" width="9" height="1" fill="#444"/><text x="852.5" y="106" font-family="Liberation Sans" font-size="11.5" letter-spacing="-0.6" fill="#444">abc</text><rect x="852.5" y="102" width="17" height="1" fill="#444"/><text x="876.5" y="106.2" font-family="Liberation Sans" font-weight="bold" font-size="12" fill="#444">x</text><text x="885.5" y="108.2" font-family="Liberation Sans" font-weight="bold" font-size="6.5" fill="#3d7bc4">2</text><text x="898.8" y="106.2" font-family="Liberation Sans" font-weight="bold" font-size="12" fill="#444">x</text><text x="907.8" y="100" font-family="Liberation Sans" font-weight="bold" font-size="6.5" fill="#3d7bc4">2</text><text x="929.5" y="103" font-family="Liberation Sans" font-size="10" fill="#444">A</text><path d="M935 103.5 L940.5 98 L944 101.5 L938.5 107 Z" fill="#e8849a"/><path d="M932 106.5 L935 103.5 L938.5 107 L935.5 110 Z" fill="#e8849a"/><path d="M935 103.5 L938.5 107" stroke="#fff" stroke-width="0.8"/><text x="776.6" y="130.6" font-family="Liberation Sans" font-weight="bold" font-size="17" fill="#fff" stroke="#a9c7ea" stroke-width="3">A</text><text x="776.6" y="130.6" font-family="Liberation Sans" font-weight="bold" font-size="17" fill="#fff" stroke="#3d7bc4" stroke-width="1.3">A</text><text x="808" y="123.8" font-family="Liberation Sans" font-weight="bold" font-size="8.5" fill="#555">ab</text><path d="M811.5 128 L822.5 117.8" stroke="#6a6a6a" stroke-width="2.2"/><rect x="808" y="129" width="16" height="3.8" fill="#ffff00"/><text x="845.5" y="128.5" font-family="Liberation Sans" font-size="13.5" fill="#555">A</text><rect x="842" y="129" width="16" height="3.8" fill="#ff0000"/><text x="876" y="129.2" font-family="Liberation Sans" font-size="12.5" fill="#555">Aa</text><text x="921.5" y="130.8" font-family="Liberation Sans" font-size="13.5" fill="#555">A</text><path d="M929 121 L931.5 118 L934 121 Z" fill="#3d7bc4"/><text x="944.3" y="130.8" font-family="Liberation Sans" font-size="10.5" fill="#555">A</text><path d="M951 118 L956 118 L953.5 121 Z" fill="#3d7bc4"/><path d="M955.5 145.5 H961.5 V151.5" fill="none" stroke="#777" stroke-width="1"/><path d="M956.5 146.5 L961 151" stroke="#777" stroke-width="1"/><path d="M955.5 145.5 H961.5 V151.5 H955.5 Z" fill="none" stroke="#888" stroke-width="0.8"/><path d="M957 147 L961 151 M958 151 H961 V148" stroke="#555" stroke-width="1" fill="none"/><path d="M752.5 145.5 H758.5 V151.5 H752.5 Z" fill="none" stroke="#888" stroke-width="0.8"/><path d="M754 147 L758 151 M755 151 H758 V148" stroke="#555" stroke-width="1" fill="none"/><circle cx="980.5" cy="72.5" r="1.5" fill="#3d7bc4"/><circle cx="980.5" cy="78.5" r="1.5" fill="#3d7bc4"/><circle cx="980.5" cy="84.5" r="1.5" fill="#3d7bc4"/><rect x="984" y="72" width="8" height="1" fill="#5a5a5a"/><rect x="984" y="78" width="8" height="1" fill="#5a5a5a"/><rect x="984" y="84" width="8" height="1" fill="#5a5a5a"/><text x="1012.3" y="75.5" font-family="Liberation Sans" font-weight="bold" font-size="5.5" fill="#3d7bc4">1</text><text x="1012.3" y="81.5" font-family="Liberation Sans" font-weight="bold" font-size="5.5" fill="#3d7bc4">2</text><text x="1012.3" y="87.5" font-family="Liberation Sans" font-weight="bold" font-size="5.5" fill="#3d7bc4">3</text><rect x="1018" y="72" width="9" height="1" fill="#5a5a5a"/><rect x="1018" y="78" width="9" height="1" fill="#5a5a5a"/><rect x="1018" y="84" width="9" height="1" fill="#5a5a5a"/><text x="1045.5" y="75" font-family="Liberation Sans" font-weight="bold" font-size="5.5" fill="#3d7bc4">1</text><text x="1049.5" y="80.5" font-family="Liberation Sans" font-weight="bold" font-size="5.5" fill="#3d7bc4">a</text><text x="1054.5" y="86.5" font-family="Liberation Sans" font-weight="bold" font-size="5.5" fill="#3d7bc4">i</text><rect x="1051" y="72" width="11" height="1" fill="#5a5a5a"/><rect x="1056" y="78" width="6" height="1" fill="#5a5a5a"/><rect x="1059" y="84" width="3" height="1" fill="#5a5a5a"/><rect x="1088" y="72" width="16" height="1" fill="#5a5a5a"/><rect x="1088" y="84" width="16" height="1" fill="#5a5a5a"/><rect x="1096" y="75" width="8" height="1" fill="#5a5a5a"/><rect x="1096" y="78" width="8" height="1" fill="#5a5a5a"/><rect x="1096" y="81" width="8" height="1" fill="#5a5a5a"/><path d="M1088.5 78.5 H1094.5 M1088.5 78.5 L1091.5 75.5 M1088.5 78.5 L1091.5 81.5" stroke="#3d7bc4" stroke-width="1.8" fill="none"/><rect x="1110" y="72" width="16" height="1" fill="#5a5a5a"/><rect x="1110" y="84" width="16" height="1" fill="#5a5a5a"/><rect x="1118" y="75" width="8" height="1" fill="#5a5a5a"/><rect x="1118" y="78" width="8" height="1" fill="#5a5a5a"/><rect x="1118" y="81" width="8" height="1" fill="#5a5a5a"/><path d="M1110.5 78.5 H1116.5 M1117 78.5 L1114 75.5 M1117 78.5 L1114 81.5" stroke="#3d7bc4" stroke-width="1.8" fill="none"/><rect x="975" y="91" width="22" height="23" fill="#c5c5c5"/><rect x="979" y="97" width="14" height="1" fill="#5a5a5a"/><rect x="979" y="103" width="14" height="1" fill="#5a5a5a"/><rect x="979" y="100" width="10" height="1" fill="#5a5a5a"/><rect x="979" y="106" width="10" height="1" fill="#5a5a5a"/><rect x="1001" y="97" width="14" height="1" fill="#5a5a5a"/><rect x="1001" y="103" width="14" height="1" fill="#5a5a5a"/><rect x="1003" y="100" width="10" height="1" fill="#5a5a5a"/><rect x="1003" y="106" width="10" height="1" fill="#5a5a5a"/><rect x="1023" y="97" width="14" height="1" fill="#5a5a5a"/><rect x="1023" y="103" width="14" height="1" fill="#5a5a5a"/><rect x="1027" y="100" width="10" height="1" fill="#5a5a5a"/><rect x="1027" y="106" width="10" height="1" fill="#5a5a5a"/><rect x="1045" y="97" width="14" height="1" fill="#5a5a5a"/><rect x="1045" y="100" width="14" height="1" fill="#5a5a5a"/><rect x="1045" y="103" width="14" height="1" fill="#5a5a5a"/><rect x="1045" y="106" width="14" height="1" fill="#5a5a5a"/><path d="M1078.3 94.5 V109.5 M1078.3 94.5 L1076 97 M1078.3 94.5 L1080.6 97 M1078.3 109.5 L1076 107 M1078.3 109.5 L1080.6 107" stroke="#3d7bc4" stroke-width="1.3" fill="none"/><rect x="1082" y="97" width="8" height="1" fill="#5a5a5a"/><rect x="1082" y="103" width="8" height="1" fill="#5a5a5a"/><rect x="1082" y="100" width="7" height="1" fill="#5a5a5a"/><rect x="1082" y="106" width="7" height="1" fill="#5a5a5a"/><path d="M981 123.5 L986.5 118 L992 123.5 L986.5 129 Z" fill="#fff" stroke="#666" stroke-width="1"/><path d="M985.5 122 V116.5 H987.5 V120" stroke="#666" stroke-width="1" fill="none"/><path d="M992 121 Q995 124 992.5 127 Z" fill="#3d7bc4"/><rect x="978.5" y="129.5" width="15" height="3" fill="#fff" stroke="#777" stroke-width="1"/><rect x="1013" y="118" width="1" height="1" fill="#555"/><rect x="1013" y="124" width="1" height="1" fill="#555"/><rect x="1015" y="118" width="1" height="1" fill="#555"/><rect x="1015" y="124" width="1" height="1" fill="#555"/><rect x="1017" y="118" width="1" height="1" fill="#555"/><rect x="1017" y="124" width="1" height="1" fill="#555"/><rect x="1019" y="118" width="1" height="1" fill="#555"/><rect x="1019" y="124" width="1" height="1" fill="#555"/><rect x="1021" y="118" width="1" height="1" fill="#555"/><rect x="1021" y="124" width="1" height="1" fill="#555"/><rect x="1023" y="118" width="1" height="1" fill="#555"/><rect x="1023" y="124" width="1" height="1" fill="#555"/><rect x="1025" y="118" width="1" height="1" fill="#555"/><rect x="1025" y="124" width="1" height="1" fill="#555"/><rect x="1013" y="120" width="1" height="1" fill="#555"/><rect x="1019" y="120" width="1" height="1" fill="#555"/><rect x="1025" y="120" width="1" height="1" fill="#555"/><rect x="1013" y="122" width="1" height="1" fill="#555"/><rect x="1019" y="122" width="1" height="1" fill="#555"/><rect x="1025" y="122" width="1" height="1" fill="#555"/><rect x="1013" y="124" width="1" height="1" fill="#555"/><rect x="1019" y="124" width="1" height="1" fill="#555"/><rect x="1025" y="124" width="1" height="1" fill="#555"/><rect x="1013" y="126" width="1" height="1" fill="#555"/><rect x="1019" y="126" width="1" height="1" fill="#555"/><rect x="1025" y="126" width="1" height="1" fill="#555"/><rect x="1013" y="128" width="1" height="1" fill="#555"/><rect x="1019" y="128" width="1" height="1" fill="#555"/><rect x="1025" y="128" width="1" height="1" fill="#555"/><rect x="1013" y="130" width="13" height="1" fill="#555"/><text x="1056.5" y="124" font-family="Liberation Sans" font-weight="bold" font-size="8.6" fill="#3d7bc4">A</text><text x="1056.8" y="132.3" font-family="Liberation Sans" font-weight="bold" font-size="8.6" fill="#8b3fb6">Z</text><path d="M1067.3 117.5 V131.5 M1064.8 128.5 L1067.3 131.5 L1069.8 128.5" stroke="#666" stroke-width="1.2" fill="none"/><text x="1087.8" y="131.5" font-family="Liberation Sans" font-weight="bold" font-size="16" fill="#666">¶</text><path d="M1125.5 145.5 H1131.5 V151.5 H1125.5 Z" fill="none" stroke="#888" stroke-width="0.8"/><path d="M1127 147 L1131 151 M1128 151 H1131 V148" stroke="#555" stroke-width="1" fill="none"/><text transform="translate(1153.8 93.8) scale(0.82 1)" x="0" y="0" font-family="Liberation Sans" font-weight="bold" font-size="28.5" fill="#3d7bc4">A</text><path d="M1170 90.5 L1180.8 80 V86.5 L1173 93.5 Z" fill="#6d6d6d"/><path d="M1159 101.5 Q1163 95 1168 92.5 Q1172 93.5 1171.5 97 Q1166 101.5 1159 101.5 Z" fill="#3d7bc4"/><circle cx="1167.5" cy="96" r="1.6" fill="#fff"/><path d="M1500.5 145.5" /><path d="M1183.5 145.5 H1189.5 V151.5 H1183.5 Z" fill="none" stroke="#888" stroke-width="0.8"/><path d="M1185 147 L1189 151 M1186 151 H1189 V148" stroke="#555" stroke-width="1" fill="none"/><rect x="1206.5" y="69.5" width="31" height="30" fill="#fff" stroke="#8c8c8c" stroke-width="1"/><circle cx="1223.6" cy="82.6" r="3.9" fill="none" stroke="#3d7bc4" stroke-width="1.6"/><path d="M1220.8 85.4 L1216.3 89.3" stroke="#3d7bc4" stroke-width="2.2" stroke-linecap="round"/><circle cx="1285" cy="85.8" r="5" fill="#cacaca" filter="url(#blur1)"/><path d="M1347 153 L1352 148.3 L1357 153" stroke="#555" stroke-width="1" fill="none"/><path d="M840.7 100.8 H845.9000000000001 L843.3000000000001 103.8 Z" fill="#555"/><path d="M795 123.8 H800.2 L797.6 126.8 Z" fill="#555"/><path d="M830 123.8 H835.2 L832.6 126.8 Z" fill="#555"/><path d="M864 123.8 H869.2 L866.6 126.8 Z" fill="#555"/><path d="M896 124 H901.2 L898.6 127 Z" fill="#555"/><path d="M1000 78 H1005.2 L1002.6 81 Z" fill="#555"/><path d="M1034 78 H1039.2 L1036.6 81 Z" fill="#555"/><path d="M1066 78 H1071.2 L1068.6 81 Z" fill="#555"/><path d="M1095 101 H1100.2 L1097.6 104 Z" fill="#555"/><path d="M1000 124 H1005.2 L1002.6 127 Z" fill="#555"/><path d="M1034 124 H1039.2 L1036.6 127 Z" fill="#555"/><rect x="920.0" y="92" width="1" height="21" fill="#c6c6c6"/><rect x="910.0" y="115" width="1" height="21" fill="#c6c6c6"/><rect x="1080.0" y="69" width="1" height="21" fill="#c6c6c6"/><rect x="1067.0" y="92" width="1" height="21" fill="#c6c6c6"/><rect x="1047.0" y="115" width="1" height="21" fill="#c6c6c6"/><rect x="1078.0" y="115" width="1" height="21" fill="#c6c6c6"/></g><circle cx="240" cy="711.8" r="2.9" fill="#5f5f5f"/><rect x="244" y="709" width="6" height="3" fill="#5f5f5f"/><path d="M237.5 714 V721.5 H249.5 V712.5 H243.5" fill="none" stroke="#5f5f5f" stroke-width="1"/><rect x="239" y="716" width="2" height="1" fill="#5f5f5f"/><rect x="242" y="716" width="2" height="1" fill="#5f5f5f"/><rect x="245" y="716" width="2" height="1" fill="#5f5f5f"/><rect x="248" y="716" width="2" height="1" fill="#5f5f5f"/><rect x="239" y="719" width="2" height="1" fill="#5f5f5f"/><rect x="242" y="719" width="2" height="1" fill="#5f5f5f"/><rect x="245" y="719" width="2" height="1" fill="#5f5f5f"/><rect x="248" y="719" width="2" height="1" fill="#5f5f5f"/><path d="M384.5 709.5 H396.5 V721.5 H384.5 Z" fill="none" stroke="#5f5f5f" stroke-width="1"/><rect x="390" y="709" width="1" height="14" fill="#5f5f5f"/><rect x="386" y="711" width="3" height="1" fill="#5f5f5f"/><rect x="392" y="711" width="3" height="1" fill="#5f5f5f"/><rect x="386" y="713" width="3" height="1" fill="#5f5f5f"/><rect x="392" y="713" width="3" height="1" fill="#5f5f5f"/><rect x="386" y="715" width="3" height="1" fill="#5f5f5f"/><rect x="392" y="715" width="3" height="1" fill="#5f5f5f"/><rect x="386" y="717" width="3" height="1" fill="#5f5f5f"/><rect x="392" y="717" width="3" height="1" fill="#5f5f5f"/><rect x="386" y="719" width="3" height="1" fill="#5f5f5f"/><rect x="392" y="719" width="3" height="1" fill="#5f5f5f"/><rect x="424.5" y="709.5" width="13" height="12" fill="none" stroke="#5f5f5f" stroke-width="1"/><rect x="426" y="711" width="10" height="1" fill="#5f5f5f"/><rect x="426" y="713" width="10" height="1" fill="#5f5f5f"/><rect x="426" y="715" width="10" height="1" fill="#5f5f5f"/><rect x="426" y="717" width="10" height="1" fill="#5f5f5f"/><rect x="426" y="719" width="10" height="1" fill="#5f5f5f"/></svg><div class="r" style="left:0px;top:0px;width:683px;height:1px;background:#1f1f1f;"></div><div class="r" style="left:0px;top:725px;width:683px;height:1px;background:#1f1f1f;"></div><div class="r" style="left:0px;top:1px;width:1px;height:724px;background:#2b579a;"></div><div class="r" style="left:1px;top:65px;width:1px;height:660px;background:#fbfaf7;"></div><div class="r" style="left:682px;top:1px;width:1px;height:724px;background:#1f1f1f;"></div></div><svg class="s" style="left:0;top:0" width="1366" height="726" viewBox="0 0 1366 726"><g opacity="0.9"><circle cx="968" cy="666" r="34" fill="none" stroke="#cfcfcf" stroke-width="1.3"/><circle cx="968" cy="666" r="26" fill="none" stroke="#fafafa" stroke-opacity="0.6" stroke-width="5"/><circle cx="968" cy="666" r="28.6" fill="none" stroke="#c8c8c8" stroke-width="1"/><circle cx="968" cy="666" r="23.4" fill="none" stroke="#c8c8c8" stroke-width="1"/><path d="M964 672 Q958 666 961 659 Q966 652 973 655 Q979 659 976 667 Q973 670 971 674" fill="none" stroke="#cdcdcd" stroke-width="2.2"/><g stroke="#d0d0d0" stroke-width="1.6"><path d="M972.5 648 V651.5 M962 651 L963.5 654 M981 651 L979.5 654 M956 658 L959 659.5 M987 658 L984 659.5 M956 667 L959 666 M987 667 L984 666 M962 673 L964 671 M981 673 L979 671"/></g><text x="1006" y="692" font-family="Liberation Sans" font-weight="bold" font-size="50" fill="#fbfbfb" fill-opacity="0.3" stroke="#c4c4c4" stroke-width="1.2" letter-spacing="2">uant</text></g></svg><div class="r" style="left:1115px;top:481px;width:251px;height:245px;background:#4a7350;"></div><svg class="s" style="left:1115px;top:481px" width="251" height="245" viewBox="1115 481 251 245"><g transform="translate(1148,718) rotate(-45) scale(0.83,1)"><text x="0" y="0" font-family="Liberation Sans" font-weight="bold" font-size="56" fill="#1479c3" stroke="#1479c3" stroke-width="2.6" stroke-linejoin="round">Truongtin<tspan fill="#ed1c24" stroke="#ed1c24">.top</tspan></text></g></svg><div class="r" style="left:1115px;top:725px;width:251px;height:1px;background:#1f1f1f;"></div></body></html>
